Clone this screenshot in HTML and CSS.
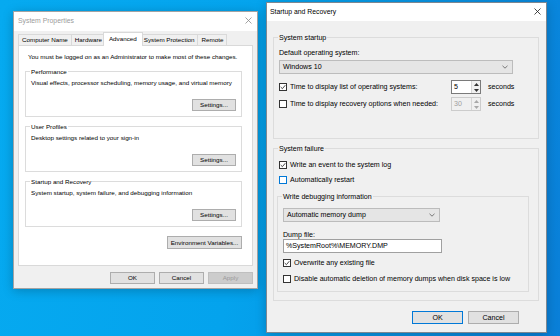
FILE: index.html
```html
<!DOCTYPE html>
<html lang="en">
  <head>
    <meta charset="utf-8">
    <link rel="stylesheet" href="styles.css">
  </head>
  <body>
    <div class="window system-properties">
      <div class="title-bar">
        <span class="title">System Properties</span>
        <svg class="close-icon" width="7" height="7" viewBox="0 0 7 7"><path d="M0.5 0.5L6.5 6.5M6.5 0.5L0.5 6.5"/></svg>
      </div>
      <div class="tabs">
        <span class="tab">Computer Name</span>
        <span class="tab">Hardware</span>
        <span class="tab tab-active">Advanced</span>
        <span class="tab">System Protection</span>
        <span class="tab">Remote</span>
      </div>
      <div class="tab-panel">
        <div class="intro">You must be logged on as an Administrator to make most of these changes.</div>
        <div class="group panel-group">
          <span class="group-title">Performance</span>
          <div class="group-text">Visual effects, processor scheduling, memory usage, and virtual memory</div>
          <button class="button settings-button">Settings...</button>
        </div>
        <div class="group panel-group">
          <span class="group-title">User Profiles</span>
          <div class="group-text">Desktop settings related to your sign-in</div>
          <button class="button settings-button">Settings...</button>
        </div>
        <div class="group panel-group">
          <span class="group-title">Startup and Recovery</span>
          <div class="group-text">System startup, system failure, and debugging information</div>
          <button class="button settings-button">Settings...</button>
        </div>
        <button class="button env-button">Environment Variables...</button>
      </div>
      <div class="dialog-buttons">
        <button class="button">OK</button>
        <button class="button">Cancel</button>
        <button class="button" disabled>Apply</button>
      </div>
    </div>

    <div class="window startup-recovery">
      <div class="title-bar">
        <span class="title">Startup and Recovery</span>
        <svg class="close-icon" width="7" height="7" viewBox="0 0 7 7"><path d="M0.5 0.5L6.5 6.5M6.5 0.5L0.5 6.5"/></svg>
      </div>
      <div class="recovery-body">
        <div class="group startup-group">
          <span class="group-title">System startup</span>
          <div class="field-label">Default operating system:</div>
          <div class="combo os-combo">
            <span>Windows 10</span>
            <svg class="chevron" width="6" height="4" viewBox="0 0 6 4"><polyline points="0.5,0.8 3,3.2 5.5,0.8"/></svg>
          </div>
          <div class="timer-row first-timer">
            <label class="check timer-label"><span class="box"><svg width="6" height="6" viewBox="0 0 6 6"><polyline points="0.7,3 2.4,4.7 5.3,1.2"/></svg></span>Time to display list of operating systems:</label>
            <span class="spin">
              <span class="spin-value">5</span>
              <span class="spin-arrows">
                <svg width="5" height="3" viewBox="0 0 5 3"><polygon points="2.5,0 5,3 0,3"/></svg>
                <svg width="5" height="3" viewBox="0 0 5 3"><polygon points="0,0 5,0 2.5,3"/></svg>
              </span>
            </span>
            <span class="unit">seconds</span>
          </div>
          <div class="timer-row">
            <label class="check timer-label"><span class="box"></span>Time to display recovery options when needed:</label>
            <span class="spin spin-disabled">
              <span class="spin-value">30</span>
              <span class="spin-arrows">
                <svg width="5" height="3" viewBox="0 0 5 3"><polygon points="2.5,0 5,3 0,3"/></svg>
                <svg width="5" height="3" viewBox="0 0 5 3"><polygon points="0,0 5,0 2.5,3"/></svg>
              </span>
            </span>
            <span class="unit">seconds</span>
          </div>
        </div>

        <div class="group failure-group">
          <span class="group-title">System failure</span>
          <label class="check event-row"><span class="box"><svg width="6" height="6" viewBox="0 0 6 6"><polyline points="0.7,3 2.4,4.7 5.3,1.2"/></svg></span>Write an event to the system log</label>
          <label class="check restart-row"><span class="box box-focus"></span>Automatically restart</label>
          <div class="group debug-group">
            <span class="group-title">Write debugging information</span>
            <div class="combo dump-combo">
              <span>Automatic memory dump</span>
              <svg class="chevron" width="6" height="4" viewBox="0 0 6 4"><polyline points="0.5,0.8 3,3.2 5.5,0.8"/></svg>
            </div>
            <div class="field-label dump-label">Dump file:</div>
            <div class="text-input">%SystemRoot%\MEMORY.DMP</div>
            <label class="check overwrite-row"><span class="box"><svg width="6" height="6" viewBox="0 0 6 6"><polyline points="0.7,3 2.4,4.7 5.3,1.2"/></svg></span>Overwrite any existing file</label>
            <label class="check disable-row"><span class="box"></span>Disable automatic deletion of memory dumps when disk space is low</label>
          </div>
        </div>

        <div class="recovery-buttons">
          <button class="button button-default">OK</button>
          <button class="button">Cancel</button>
        </div>
      </div>
    </div>
  </body>
</html>
```

FILE: styles.css
```css
body {
  margin: 0;
  width: 560px;
  height: 336px;
  overflow: hidden;
  position: relative;
  background: linear-gradient(100deg, #06aaf0 0%, #04a3ed 45%, #0891e2 75%, #0a7fd8 100%);
  font-family: "Liberation Sans", Arial, sans-serif;
  color: #000;
}

/* windows sit on the desktop at their own place */
.window {
  position: absolute;
  box-sizing: border-box;
  display: flex;
  flex-direction: column;
  background-color: #f0f0f0;
  border: 1px solid #a3a3a3;
  box-shadow: 0 2px 10px rgba(0, 0, 0, 0.22);
}

.system-properties {
  left: 13px;
  top: 11px;
  width: 245px;
  height: 278px;
  font-size: 6.25px;
}

.startup-recovery {
  left: 266px;
  top: 2px;
  width: 281px;
  height: 331px;
  font-size: 7.1px;
  border-color: #7d8791;
}

.title-bar {
  display: flex;
  align-items: center;
  flex-shrink: 0;
  background-color: #fff;
  font-size: 6.85px;
}

.title {
  flex: 1;
}

.close-icon {
  fill: none;
  stroke-width: 0.8;
}

.system-properties .title-bar {
  height: 19px;
  padding: 0 5px 3px 4px;
  box-sizing: border-box;
  color: #9b9b9b;
}

.system-properties .close-icon {
  stroke: #8a8a8a;
}

.startup-recovery .title-bar {
  height: 18px;
  padding: 0 5px 2px 3px;
  box-sizing: border-box;
}

.startup-recovery .close-icon {
  stroke: #1a1a1a;
}

button {
  font: inherit;
  color: #000;
  padding: 0;
  margin: 0;
}

.button {
  box-sizing: border-box;
  height: 12px;
  width: 45px;
  border: 1px solid #adadad;
  background-color: #e1e1e1;
  line-height: 10px;
}

.button:disabled {
  background-color: #cccccc;
  border-color: #bfbfbf;
  color: #9a9a9a;
}

/* System Properties */

.tabs {
  display: flex;
  align-items: flex-end;
  height: 14px;
  padding-left: 5px;
  flex-shrink: 0;
}

.tab {
  box-sizing: border-box;
  height: 11px;
  line-height: 10px;
  padding: 0 3px;
  margin-left: -1px;
  border: 1px solid #d9d9d9;
  border-bottom: none;
  background-color: #f0f0f0;
}

.tab-active {
  position: relative;
  z-index: 1;
  height: 14px;
  line-height: 11px;
  margin: 0 -2px -1px -3px;
  padding: 0 5px;
  background-color: #fff;
}

.tab-panel {
  box-sizing: border-box;
  height: 221px;
  margin: 0 4px;
  padding: 6px 10px 0 6px;
  border: 1px solid #d9d9d9;
  background-color: #fff;
  display: flex;
  flex-direction: column;
}

.intro {
  line-height: 10px;
  margin-left: 3px;
}

.group {
  box-sizing: border-box;
  display: flex;
  flex-direction: column;
  border: 1px solid #dcdcdc;
  padding: 0 5px;
}

.group-title {
  align-self: flex-start;
  line-height: 10px;
  margin: -5px 0 0 -1px;
  padding: 0 1px;
  background-color: #f0f0f0;
}

.panel-group {
  height: 46px;
  margin-top: 9px;
  padding-bottom: 5px;
}

.panel-group:first-of-type {
  margin-top: 10px;
}

.panel-group .group-title {
  background-color: #fff;
}

.group-text {
  line-height: 10px;
  margin-top: 1px;
}

.settings-button {
  width: 44px;
  margin-top: auto;
  align-self: flex-end;
}

.env-button {
  width: 75px;
  height: 13px;
  margin-top: 9px;
  align-self: flex-end;
}

.dialog-buttons {
  display: flex;
  justify-content: flex-end;
  gap: 4px;
  padding: 6px 4px 0 0;
}

/* Startup and Recovery */

.recovery-body {
  display: flex;
  flex-direction: column;
  padding: 16px 7px 0 6px;
}

.startup-group {
  height: 102px;
}

.field-label {
  line-height: 10px;
  margin-top: 5px;
}

.combo {
  box-sizing: border-box;
  height: 14px;
  display: flex;
  align-items: center;
  justify-content: space-between;
  padding: 0 4px 0 3px;
  border: 1px solid #bcbcbc;
  background-color: #e5e5e5;
}

.chevron {
  fill: none;
  stroke: #5a5a5a;
  stroke-width: 0.8;
}

.os-combo {
  width: 234px;
  margin-top: 2px;
}

.timer-row {
  display: flex;
  align-items: center;
  height: 14px;
  margin-top: 3px;
}

.first-timer {
  margin-top: 6px;
}

.timer-label {
  width: 172px;
}

.check {
  display: flex;
  align-items: center;
  gap: 3px;
  line-height: 10px;
}

.box {
  box-sizing: border-box;
  width: 8px;
  height: 8px;
  flex-shrink: 0;
  border: 1px solid #333;
  background-color: #fff;
  display: flex;
}

.box svg {
  fill: none;
  stroke: #333;
  stroke-width: 0.9;
}

.box-focus {
  border-color: #0078d7;
}

.spin {
  box-sizing: border-box;
  width: 30px;
  height: 14px;
  display: flex;
  border: 1px solid #7a7a7a;
  background-color: #fff;
}

.spin-value {
  flex: 1;
  padding-left: 2px;
  line-height: 12px;
}

.spin-arrows {
  width: 8px;
  display: flex;
  flex-direction: column;
  justify-content: space-around;
  align-items: center;
  border-left: 1px solid #d6d6d6;
  background-color: #f0f0f0;
}

.spin-arrows svg {
  fill: #333;
}

.spin-disabled {
  border-color: #cccccc;
  background-color: #f0f0f0;
  color: #a0a0a0;
}

.spin-disabled .spin-arrows svg {
  fill: #a8a8a8;
}

.unit {
  margin-left: 7px;
}

.failure-group {
  height: 153px;
  margin-top: 9px;
}

.event-row {
  margin-top: 6px;
}

.restart-row {
  margin-top: 5px;
}

.debug-group {
  height: 96px;
  margin: 11px 4px 0 -2px;
}

.dump-combo {
  width: 157px;
  margin-top: 6px;
}

.dump-label {
  line-height: 8px;
  margin-top: 9px;
}

.text-input {
  box-sizing: border-box;
  width: 159px;
  height: 14px;
  line-height: 12px;
  padding-left: 2px;
  border: 1px solid #a0a0a0;
  background-color: #fff;
}

.overwrite-row {
  margin-top: 5px;
}

.disable-row {
  margin-top: 6px;
}

.recovery-buttons {
  display: flex;
  justify-content: flex-end;
  gap: 5px;
  margin-top: 10px;
  padding-right: 20px;
}

.recovery-buttons .button {
  width: 51px;
  height: 13px;
}

.button-default {
  border-color: #0078d7;
}
```
